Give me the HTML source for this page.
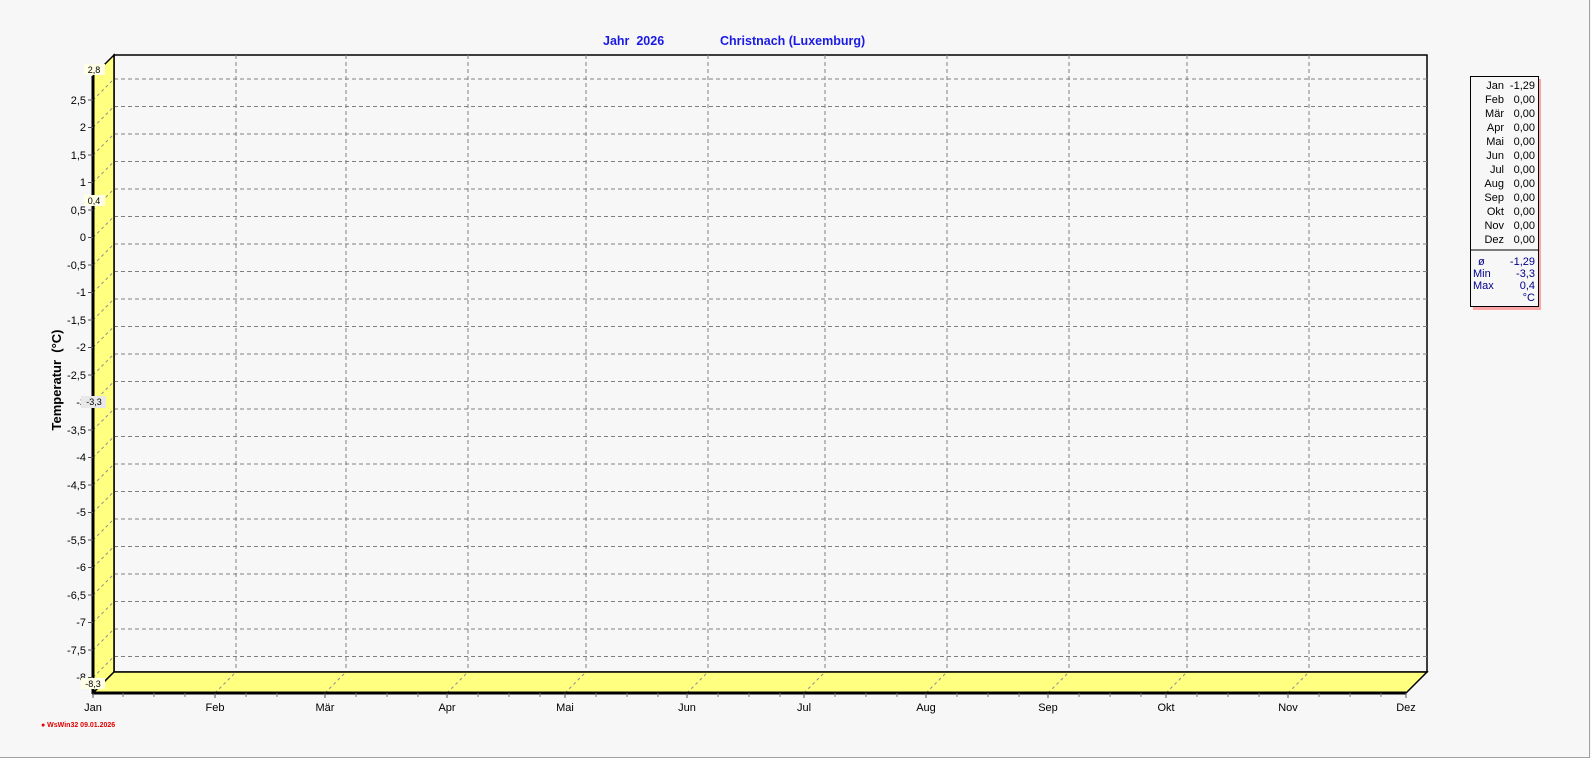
<!DOCTYPE html>
<html><head><meta charset="utf-8"><style>
html,body{margin:0;padding:0;background:#f7f7f7;}
svg{display:block;font-family:"Liberation Sans",sans-serif;}
</style></head><body>
<svg width="1591" height="758" xmlns="http://www.w3.org/2000/svg">
<rect x="0" y="0" width="1591" height="758" fill="#f7f7f7"/>
<path d="M1589.5 0V757.5H0" fill="none" stroke="#a0a0a0"/>
<text x="603" y="45" font-size="12.5" font-weight="bold" fill="#1a1ae6" xml:space="preserve">Jahr  2026</text>
<text x="720" y="45" font-size="12.5" font-weight="bold" fill="#1a1ae6">Christnach (Luxemburg)</text>
<rect x="114" y="55" width="1313" height="617" fill="#f7f7f7" stroke="#000" stroke-width="1.5"/>
<path stroke="#808080" stroke-dasharray="4,3" fill="none" d="M114 79H1427M114 106.5H1427M114 134H1427M114 161.5H1427M114 189H1427M114 216.5H1427M114 244H1427M114 271.5H1427M114 299H1427M114 326.5H1427M114 354H1427M114 381.5H1427M114 409H1427M114 436.5H1427M114 464H1427M114 491.5H1427M114 519H1427M114 546.5H1427M114 574H1427M114 601.5H1427M114 629H1427M114 656.5H1427M236 55V672M346 55V672M468 55V672M586 55V672M708 55V672M825 55V672M947 55V672M1069 55V672M1187 55V672M1309 55V672"/>
<polygon points="93,76 114,55 114,672 93,693" fill="#ffff80" stroke="#000" stroke-width="1.5"/>
<polygon points="93,693 114,672 1427,672 1406,693" fill="#ffff80" stroke="#000" stroke-width="1.5"/>
<path stroke="#909090" stroke-dasharray="3,3" fill="none" d="M93 100L114 79M93 127.5L114 106.5M93 155L114 134M93 182.5L114 161.5M93 210L114 189M93 237.5L114 216.5M93 265L114 244M93 292.5L114 271.5M93 320L114 299M93 347.5L114 326.5M93 375L114 354M93 402.5L114 381.5M93 430L114 409M93 457.5L114 436.5M93 485L114 464M93 512.5L114 491.5M93 540L114 519M93 567.5L114 546.5M93 595L114 574M93 622.5L114 601.5M93 650L114 629M93 677.5L114 656.5M215 693L236 672M325 693L346 672M447 693L468 672M565 693L586 672M687 693L708 672M804 693L825 672M926 693L947 672M1048 693L1069 672M1166 693L1187 672M1288 693L1309 672"/>
<path stroke="#000" stroke-width="3" fill="none" d="M93 76V694M92 693H1406"/>
<path stroke="#555" fill="none" d="M88 100H93M88 127.5H93M88 155H93M88 182.5H93M88 210H93M88 237.5H93M88 265H93M88 292.5H93M88 320H93M88 347.5H93M88 375H93M88 402.5H93M88 430H93M88 457.5H93M88 485H93M88 512.5H93M88 540H93M88 567.5H93M88 595H93M88 622.5H93M88 650H93M88 677.5H93
M93 693V698M215 693V698M325 693V698M447 693V698M565 693V698M687 693V698M804 693V698M926 693V698M1048 693V698M1166 693V698M1288 693V698M1406 693V698"/>
<path stroke="#777" fill="none" d="M123 693V697M154 693V697M185 693V697M246 693V697M277 693V697M356 693V697M387 693V697M418 693V697M478 693V697M509 693V697M540 693V697M596 693V697M627 693V697M658 693V697M718 693V697M749 693V697M780 693V697M835 693V697M866 693V697M897 693V697M957 693V697M988 693V697M1019 693V697M1079 693V697M1110 693V697M1141 693V697M1197 693V697M1228 693V697M1259 693V697M1319 693V697M1350 693V697M1381 693V697"/>
<g font-size="11" fill="#000" text-anchor="end">
<text x="86" y="104">2,5</text><text x="86" y="131">2</text><text x="86" y="159">1,5</text><text x="86" y="186">1</text><text x="86" y="214">0,5</text><text x="86" y="241">0</text><text x="86" y="269">-0,5</text><text x="86" y="296">-1</text><text x="86" y="324">-1,5</text><text x="86" y="351">-2</text><text x="86" y="379">-2,5</text><text x="86" y="406">-3</text><text x="86" y="434">-3,5</text><text x="86" y="461">-4</text><text x="86" y="489">-4,5</text><text x="86" y="516">-5</text><text x="86" y="544">-5,5</text><text x="86" y="571">-6</text><text x="86" y="599">-6,5</text><text x="86" y="626">-7</text><text x="86" y="654">-7,5</text><text x="86" y="681">-8</text>
</g>
<g font-size="11" fill="#000" text-anchor="middle">
<text x="93" y="711">Jan</text><text x="215" y="711">Feb</text><text x="325" y="711">Mär</text><text x="447" y="711">Apr</text><text x="565" y="711">Mai</text><text x="687" y="711">Jun</text><text x="804" y="711">Jul</text><text x="926" y="711">Aug</text><text x="1048" y="711">Sep</text><text x="1166" y="711">Okt</text><text x="1288" y="711">Nov</text><text x="1406" y="711">Dez</text>
</g>
<rect x="84" y="64" width="21" height="11" fill="#ffffe8"/><text x="94" y="73" font-size="9" text-anchor="middle">2,8</text>
<rect x="84" y="195" width="21" height="11" fill="#ffffe8"/><text x="94" y="204" font-size="9" text-anchor="middle">0,4</text>
<rect x="81" y="396" width="25" height="12" fill="#e8e8e8"/><text x="94" y="405" font-size="9" text-anchor="middle">-3,3</text>
<rect x="81" y="678" width="24" height="11" fill="#ffffe8"/><text x="93" y="687" font-size="9" text-anchor="middle">-8,3</text>
<text transform="translate(61,380) rotate(-90)" font-size="13" font-weight="bold" text-anchor="middle" xml:space="preserve">Temperatur  (°C)</text>
<text x="41" y="727" font-size="7" font-weight="bold" fill="#e00000">● WsWin32  09.01.2026</text>
<rect x="1473" y="79" width="68" height="231" fill="#ff8080" opacity="0.7"/>
<rect x="1470.5" y="76.5" width="68" height="230" fill="#f7f7f7" stroke="#000"/>
<line x1="1471" y1="250" x2="1538" y2="250" stroke="#000"/>
<g font-size="11" fill="#000" text-anchor="end">
<text x="1504" y="89">Jan</text><text x="1535" y="89">-1,29</text>
<text x="1504" y="103">Feb</text><text x="1535" y="103">0,00</text>
<text x="1504" y="117">Mär</text><text x="1535" y="117">0,00</text>
<text x="1504" y="131">Apr</text><text x="1535" y="131">0,00</text>
<text x="1504" y="145">Mai</text><text x="1535" y="145">0,00</text>
<text x="1504" y="159">Jun</text><text x="1535" y="159">0,00</text>
<text x="1504" y="173">Jul</text><text x="1535" y="173">0,00</text>
<text x="1504" y="187">Aug</text><text x="1535" y="187">0,00</text>
<text x="1504" y="201">Sep</text><text x="1535" y="201">0,00</text>
<text x="1504" y="215">Okt</text><text x="1535" y="215">0,00</text>
<text x="1504" y="229">Nov</text><text x="1535" y="229">0,00</text>
<text x="1504" y="243">Dez</text><text x="1535" y="243">0,00</text>
</g>
<g font-size="11" fill="#00008b">
<text x="1478" y="265">ø</text><text x="1473" y="277">Min</text><text x="1473" y="289">Max</text>
<g text-anchor="end"><text x="1535" y="265">-1,29</text><text x="1535" y="277">-3,3</text><text x="1535" y="289">0,4</text><text x="1535" y="301">°C</text></g>
</g>
</svg>
</body></html>
